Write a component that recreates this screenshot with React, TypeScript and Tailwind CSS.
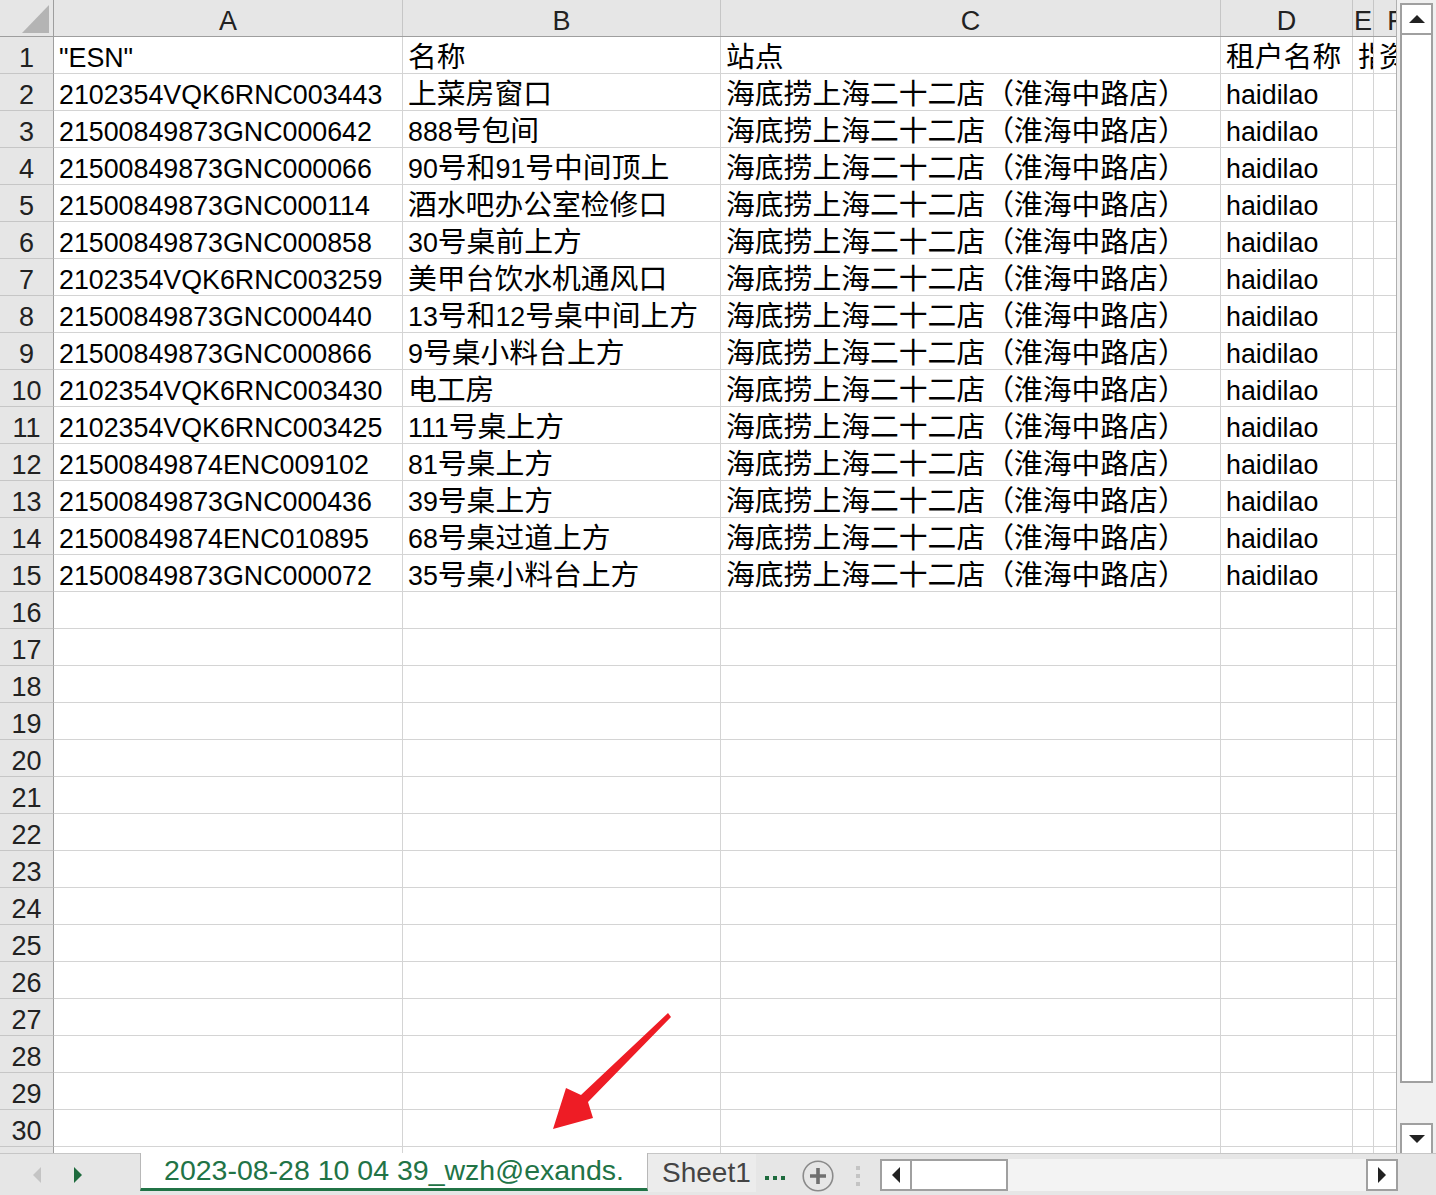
import React from "react";

const rows: string[][] = [
  ['"ESN"', "名称", "站点", "租户名称", "指派人", "资产编号"],
  ["2102354VQK6RNC003443", "上菜房窗口"],
  ["21500849873GNC000642", "888号包间"],
  ["21500849873GNC000066", "90号和91号中间顶上"],
  ["21500849873GNC000114", "酒水吧办公室检修口"],
  ["21500849873GNC000858", "30号桌前上方"],
  ["2102354VQK6RNC003259", "美甲台饮水机通风口"],
  ["21500849873GNC000440", "13号和12号桌中间上方"],
  ["21500849873GNC000866", "9号桌小料台上方"],
  ["2102354VQK6RNC003430", "电工房"],
  ["2102354VQK6RNC003425", "111号桌上方"],
  ["21500849874ENC009102", "81号桌上方"],
  ["21500849873GNC000436", "39号桌上方"],
  ["21500849874ENC010895", "68号桌过道上方"],
  ["21500849873GNC000072", "35号桌小料台上方"],
];

const STORE = "海底捞上海二十二店（淮海中路店）";

const colW = ["w-[349px]", "w-[318px]", "w-[500px]", "w-[132px]", "w-[21px]", "w-[44px]"];
const letters = ["A", "B", "C", "D", "E", "F"];

function cellsFor(i: number): string[] {
  if (i === 0) return rows[0];
  const r = rows[i];
  if (!r) return ["", "", "", "", "", ""];
  return [r[0], r[1], STORE, "haidilao", "", ""];
}

// CJK glyphs in the sheet run a bit wider than the latin ones, so split the runs
function Mixed({ text }: { text: string }) {
  const parts = text.match(/[\u3000-\u9fff\uff00-\uffef]+|[^\u3000-\u9fff\uff00-\uffef]+/g) || [];
  return (
    <>
      {parts.map((p, i) =>
        /[\u3000-\u9fff\uff00-\uffef]/.test(p) ? (
          <span key={i} className="text-[28.8px]">
            {p}
          </span>
        ) : (
          <span key={i} className="text-[26.8px]">
            {p}
          </span>
        )
      )}
    </>
  );
}

function HeaderRow() {
  return (
    <div className="flex h-[37px] shrink-0 border-b border-[#9e9e9e] bg-[#e6e6e6]">
      <div className="relative w-[54px] shrink-0 border-r border-[#9e9e9e]">
        <svg className="absolute left-0 top-0" width="53" height="36" viewBox="0 0 53 36">
          <polygon points="22,33 49,5 49,33" fill="#b4b4b4" />
        </svg>
      </div>
      {letters.map((l, i) => (
        <div
          key={l}
          className={`${colW[i]} shrink-0 flex items-center justify-center border-r border-[#c6c6c6] pt-[6px] text-[27px] text-[#222]`}
        >
          {l}
        </div>
      ))}
    </div>
  );
}

function GridRow({ n }: { n: number }) {
  const cells = cellsFor(n - 1);
  return (
    <div className="flex h-[37px] shrink-0 border-b border-[#d4d4d4]">
      <div className="-mb-px w-[54px] shrink-0 flex items-center justify-center border-r border-b border-r-[#9e9e9e] border-b-[#c6c6c6] bg-[#e6e6e6] pt-[6px] text-[27px] text-[#222]">
        {n}
      </div>
      {cells.map((c, i) => (
        <div
          key={i}
          className={`${colW[i]} shrink-0 flex items-center overflow-hidden whitespace-nowrap border-r border-[#d4d4d4] pl-[5px] pt-[6px] text-black`}
        >
          <Mixed text={c} />
        </div>
      ))}
    </div>
  );
}

function Tri({ dir, color }: { dir: "up" | "down" | "left" | "right"; color: string }) {
  const pts = {
    up: "0,8 8,0 16,8",
    down: "0,0 16,0 8,8",
    left: "8,0 8,16 0,8",
    right: "0,0 8,8 0,16",
  }[dir];
  const horiz = dir === "up" || dir === "down";
  return (
    <svg width={horiz ? 16 : 8} height={horiz ? 8 : 16} viewBox={horiz ? "0 0 16 8" : "0 0 8 16"}>
      <polygon points={pts} fill={color} />
    </svg>
  );
}

function VScroll() {
  return (
    <div className="flex w-[39px] shrink-0 flex-col bg-[#f0f0f0] pl-[3px] pt-[3px]">
      <div className="flex h-[32px] w-[33px] items-center justify-center border-2 border-[#a0a0a0] bg-white">
        <Tri dir="up" color="#222" />
      </div>
      <div className="h-[1048px] w-[33px] border-2 border-t-0 border-[#a0a0a0] bg-white" />
      <div className="flex-1" />
      <div className="-mb-[2px] flex h-[32px] w-[33px] items-center justify-center border-2 border-[#a0a0a0] bg-white">
        <Tri dir="down" color="#222" />
      </div>
    </div>
  );
}

function TabBar() {
  return (
    <div className="flex h-[42px] shrink-0 items-stretch border-t border-[#c6c6c6] bg-[#e6e6e6]">
      <div className="flex w-[140px] shrink-0 items-center gap-[33px] pl-[33px]">
        <Tri dir="left" color="#c4c4c4" />
        <Tri dir="right" color="#1e6b3d" />
      </div>
      <div className="-mt-px flex h-[38px] w-[508px] shrink-0 items-center justify-center border-x border-[#b8b8b8] border-b-[3px] border-b-[#217346] bg-white text-[28.5px] text-[#217346]">
        2023-08-28 10 04 39_wzh@exands.
      </div>
      <div className="flex h-[38px] w-[108px] shrink-0 items-center bg-[#ececec] pl-[14px] text-[28px] text-[#444]">
        Sheet1
      </div>
      <div className="ml-[9px] flex items-center gap-[4px] pt-[6px]">
        <div className="h-[4px] w-[4px] bg-[#1e6b3d]" />
        <div className="h-[4px] w-[4px] bg-[#1e6b3d]" />
        <div className="h-[4px] w-[4px] bg-[#1e6b3d]" />
      </div>
      <div className="ml-[17px] flex items-center pt-[2px]">
        <svg width="32" height="32" viewBox="0 0 32 32">
          <circle cx="16" cy="16" r="14.8" fill="none" stroke="#8a8a8a" strokeWidth="1.6" />
          <path d="M16 8v16M8 16h16" stroke="#707070" strokeWidth="3.6" />
        </svg>
      </div>
      <div className="ml-[22px] flex flex-col items-center justify-center gap-[4px] pt-[2px]">
        <div className="h-[4px] w-[4px] bg-[#c4c4c4]" />
        <div className="h-[4px] w-[4px] bg-[#c4c4c4]" />
        <div className="h-[4px] w-[4px] bg-[#c4c4c4]" />
      </div>
      <div className="ml-[20px] flex h-[32px] w-[518px] shrink-0 self-center bg-[#f3f3f3]">
        <div className="flex w-[32px] items-center justify-center border-2 border-[#a0a0a0] bg-white">
          <Tri dir="left" color="#222" />
        </div>
        <div className="w-[96px] border-2 border-l-0 border-[#a0a0a0] bg-white" />
        <div className="flex-1" />
        <div className="flex w-[32px] items-center justify-center border-2 border-[#a0a0a0] bg-white">
          <Tri dir="right" color="#222" />
        </div>
      </div>
    </div>
  );
}

export default function App() {
  const nums = Array.from({ length: 31 }, (_, i) => i + 1);
  return (
    <div className="relative flex h-[1195px] w-[1436px] flex-col overflow-hidden bg-white font-['Liberation_Sans','Noto_Sans_CJK_SC',sans-serif]">
      <div className="flex h-[1153px] shrink-0">
        <div className="flex w-[1397px] shrink-0 flex-col overflow-hidden border-r border-[#b0b0b0]">
          <HeaderRow />
          {nums.map((n) => (
            <GridRow key={n} n={n} />
          ))}
        </div>
        <VScroll />
      </div>
      <TabBar />
      <svg className="pointer-events-none absolute left-0 top-0" width="1436" height="1195" viewBox="0 0 1436 1195">
        <polygon
          points="668,1013 671,1017 588,1102 593,1118 553,1129 566,1088 581,1095"
          fill="#ee1c25"
        />
      </svg>
    </div>
  );
}
